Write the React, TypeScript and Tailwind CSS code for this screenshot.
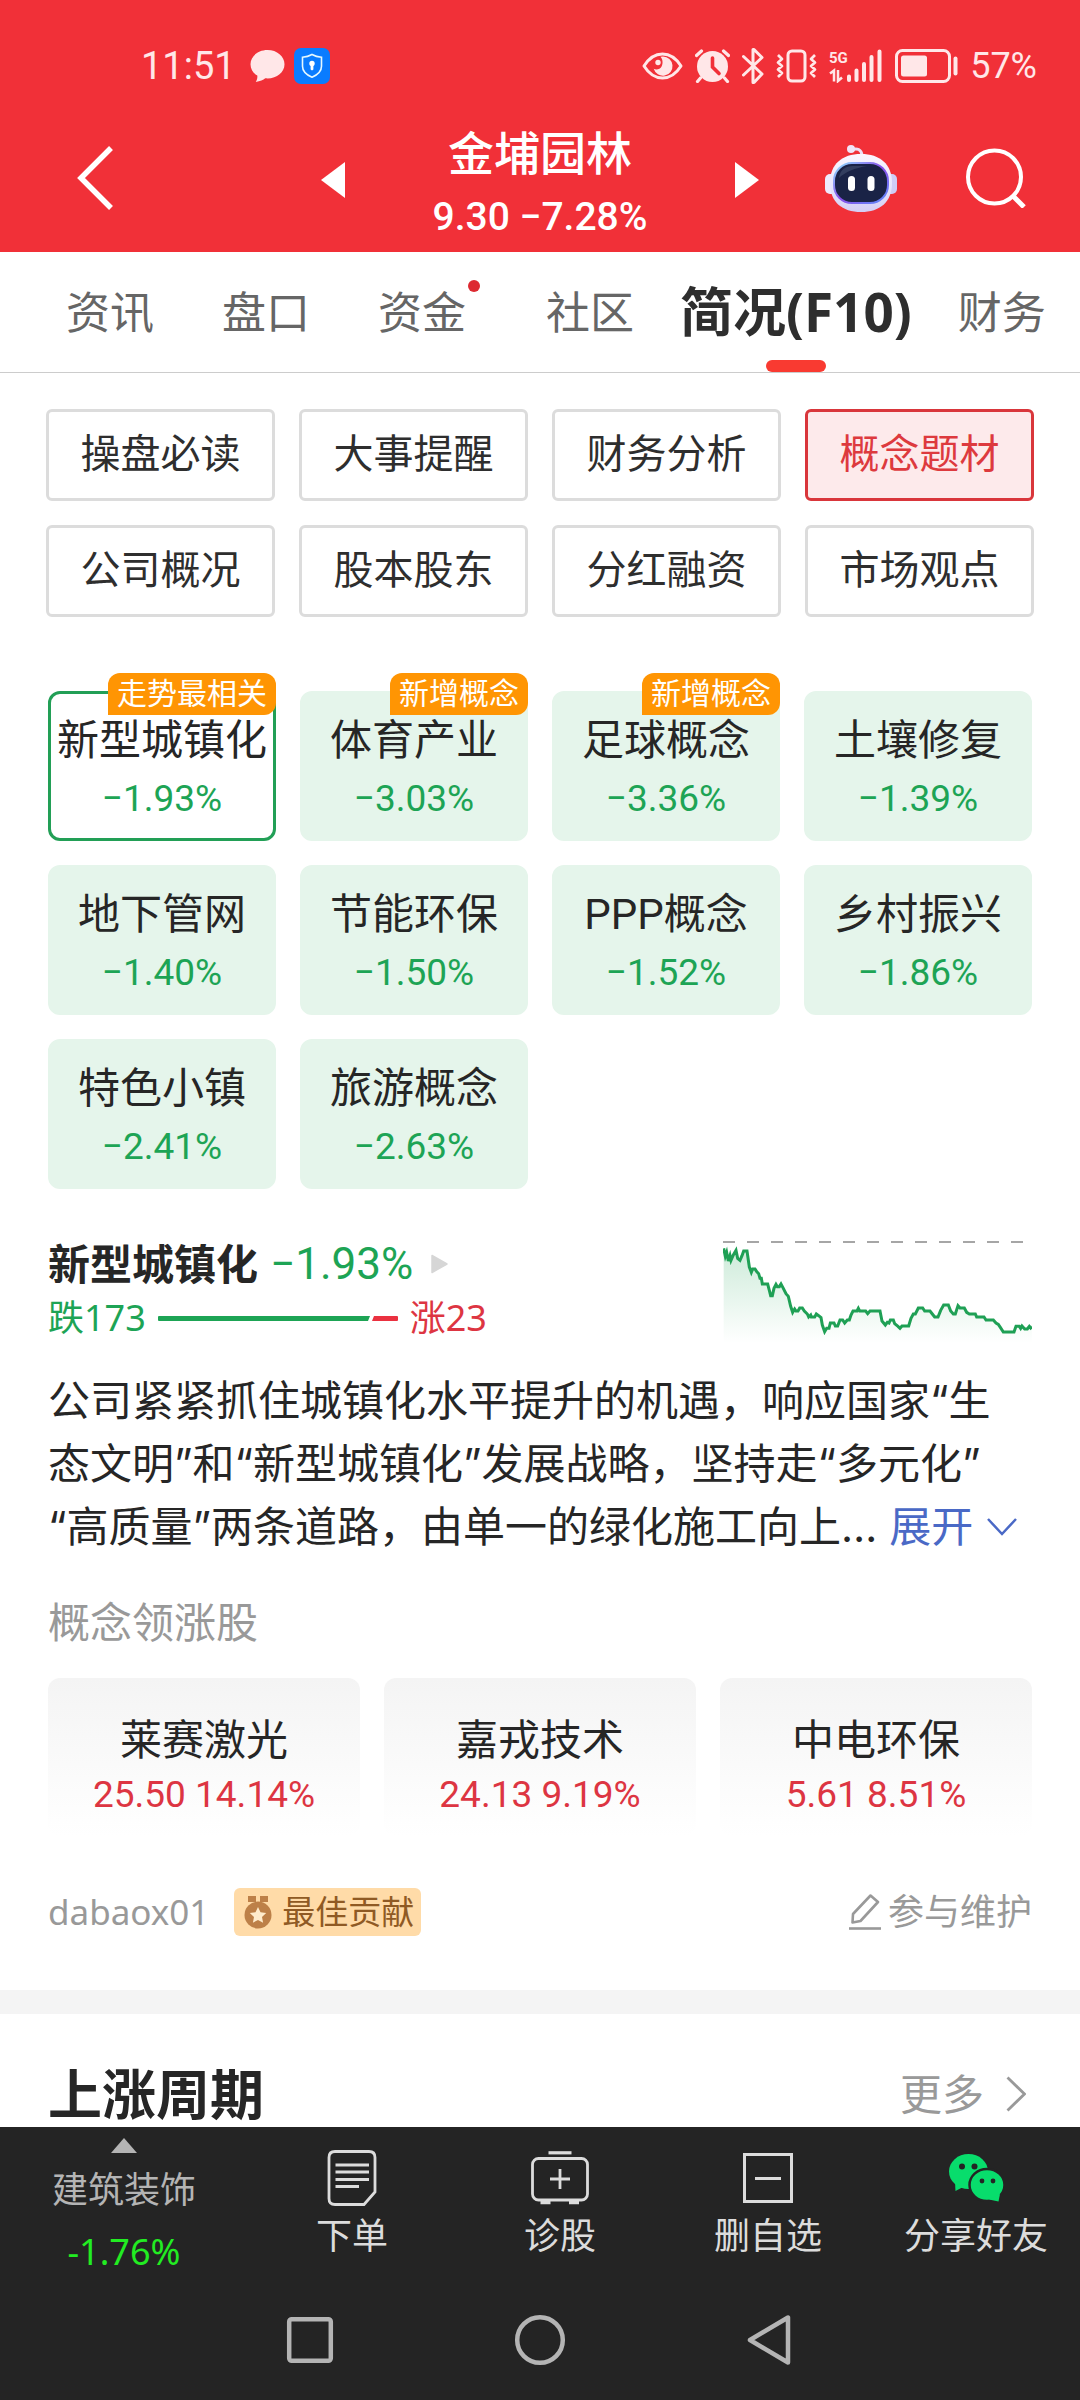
import React from "react";

const cjk = "font-['Noto_Sans','Noto_Sans_CJK_SC',sans-serif]";
const num = "font-['Roboto','Noto_Sans_CJK_SC',sans-serif]";

const sections = ["操盘必读", "大事提醒", "财务分析", "概念题材", "公司概况", "股本股东", "分红融资", "市场观点"];

type Concept = { name: string; change: string; badge?: string; selected?: boolean };

const concepts: Concept[] = [
  { name: "新型城镇化", change: "−1.93%", badge: "走势最相关", selected: true },
  { name: "体育产业", change: "−3.03%", badge: "新增概念" },
  { name: "足球概念", change: "−3.36%", badge: "新增概念" },
  { name: "土壤修复", change: "−1.39%" },
  { name: "地下管网", change: "−1.40%" },
  { name: "节能环保", change: "−1.50%" },
  { name: "PPP概念", change: "−1.52%" },
  { name: "乡村振兴", change: "−1.86%" },
  { name: "特色小镇", change: "−2.41%" },
  { name: "旅游概念", change: "−2.63%" },
];

const leaders = [
  { name: "莱赛激光", quote: "25.50 14.14%" },
  { name: "嘉戎技术", quote: "24.13 9.19%" },
  { name: "中电环保", quote: "5.61 8.51%" },
];

function StatusBar() {
  return (
    <div className="flex h-[130px] items-center justify-between pl-[141px] pr-[43px] pt-[2px] text-[#ffe7e8]">
      <div className="flex items-center">
        <span className={`${num} text-[38px] leading-[44px]`}>11:51</span>
        <svg className="ml-[14px]" width="35" height="34" viewBox="0 0 35 34" fill="currentColor">
          <path d="M17.5 1C8 1 .5 7.3.5 15.2c0 4.8 2.6 8.900 6.800 11.400.3 2.500-.500 4.500-1.500 6.400 4.500-.6 7.400-2.200 9.500-3.700.7.1 1.400.1 2.200.1 9.500 0 17-6.300 17-14.200S27 1 17.500 1Z" />
        </svg>
        <svg className="ml-[9px]" width="36" height="36" viewBox="0 0 36 36">
          <rect width="36" height="36" rx="7" fill="#0a7cff" />
          <path d="M18 6.500c3.200 1.800 6.400 2.500 9.500 2.700v9c0 5-4 8.600-9.500 11-5.500-2.400-9.500-6-9.500-11v-9c3.100-.2 6.300-.9 9.500-2.700Z" fill="none" stroke="#e5f8ff" strokeWidth="1.600" />
          <circle cx="18" cy="15.500" r="2.700" fill="#fff" />
          <path d="M16.600 16h2.800v5.500l-1.400 1-1.400-1Z" fill="#fff" />
        </svg>
      </div>
      <div className="flex items-center gap-3">
        <svg width="41" height="28" viewBox="0 0 41 28">
          <path d="M2 14C7 6 13 2 20.500 2S34 6 39 14c-5 8-11 12-18.500 12S7 22 2 14Z" fill="none" stroke="currentColor" strokeWidth="3" strokeLinejoin="round" />
          <path d="M21 4.500a9.600 9.600 0 1 1-9.300 12.300c2.600 1.600 6.500.5 8-2.500 1.600-3.300.9-7.300-1.200-9.500Z" fill="currentColor" />
          <circle cx="16" cy="10.500" r="2.700" fill="currentColor" />
        </svg>
        <svg width="35" height="34" viewBox="0 0 35 34">
          <circle cx="17.500" cy="17.500" r="15.500" fill="currentColor" />
          <path d="M1.500 6.500 6.500 2M33.500 6.500l-5-4.500M5.500 29 2.500 32.500M29.500 29l3 3.500" stroke="currentColor" strokeWidth="3.200" strokeLinecap="round" />
          <path d="M17.500 9v9l6.500 6.500" fill="none" stroke="#f13038" strokeWidth="3.600" strokeLinecap="round" />
        </svg>
        <svg width="22" height="38" viewBox="0 0 22 38" fill="none" stroke="currentColor" strokeWidth="3" strokeLinecap="round" strokeLinejoin="round">
          <path d="M1.500 9.500 20 27l-8 8.500h-1v-33h1l8 8L1.500 28" />
        </svg>
        <svg width="41" height="34" viewBox="0 0 41 34" fill="none" stroke="currentColor" strokeWidth="3" strokeLinejoin="round">
          <rect x="12" y="2" width="17" height="30" rx="4" />
          <path d="m2 6 4 4-4 3.500 4 3.500-4 3.500 4 3.500-4 4M39 6l-4 4 4 3.500-4 3.500 4 3.500-4 3.500 4 4" strokeWidth="2.700" />
        </svg>
        <svg width="54" height="34" viewBox="0 0 54 34">
          <text x="0" y="14" fill="currentColor" fontFamily="Roboto" fontWeight="700" fontSize="15">5G</text>
          <path d="M1 24.500 5 21.500v11M9 21v11l4-3.500" fill="none" stroke="currentColor" strokeWidth="2.500" />
          <path d="M20 27.500V31M27.500 21.500V31M35 15v16M42.500 8v23M50.500 2.500V31" stroke="currentColor" strokeWidth="4" strokeLinecap="round" />
        </svg>
        <svg width="63" height="34" viewBox="0 0 63 34">
          <rect x="1.500" y="1.500" width="53" height="31" rx="6" fill="none" stroke="currentColor" strokeWidth="3" />
          <rect x="6" y="6.500" width="26" height="21" rx="2.500" fill="currentColor" />
          <path d="M60.500 9.500v15" stroke="currentColor" strokeWidth="4" strokeLinecap="round" />
        </svg>
        <span className={`${num} text-[36px] leading-[44px]`}>57%</span>
      </div>
    </div>
  );
}

function Robot() {
  return (
    <svg width="72" height="68" viewBox="0 0 72 68">
      <defs>
        <linearGradient id="shell" x1="0" y1="0" x2="0" y2="1">
          <stop offset="0" stopColor="#fbf7ff" />
          <stop offset="0.600" stopColor="#e6e4fb" />
          <stop offset="1" stopColor="#d3cdf5" />
        </linearGradient>
        <linearGradient id="rim" x1="0" y1="0" x2="1" y2="1">
          <stop offset="0" stopColor="#8fe3ff" />
          <stop offset="0.500" stopColor="#8a4dea" />
          <stop offset="1" stopColor="#5c8dfa" />
        </linearGradient>
      </defs>
      <path d="M27 5.500c5-1.500 9.500-.5 10 6" fill="none" stroke="#eedff5" strokeWidth="3" />
      <circle cx="26" cy="5" r="4" fill="#f1e4f8" />
      <rect x="0" y="30" width="12" height="20" rx="5" fill="#eeeafd" />
      <rect x="60" y="30" width="12" height="20" rx="5" fill="#cfcdf6" />
      <path d="M36 10c19 0 31 10 31 29S55 68 36 68 5 58 5 39s12-29 31-29Z" fill="url(#shell)" />
      <rect x="9" y="19" width="54" height="40" rx="18" fill="#1a2346" stroke="url(#rim)" strokeWidth="2" />
      <path d="M14 34c1-8 6-12 14-12h14c-12 2-22 6-28 12Z" fill="#44506f" opacity="0.600" />
      <rect x="23" y="32" width="7" height="15" rx="3.500" fill="#fff" />
      <rect x="42.500" y="32" width="7" height="15" rx="3.500" fill="#fff" />
    </svg>
  );
}

function Header() {
  return (
    <header className="bg-[#f13038] text-white">
      <StatusBar />
      <div className="grid grid-cols-[1fr_438px_1fr] items-start pb-[15px]">
        <div className="flex pl-[76px]">
          <button aria-label="返回" className="flex h-24 items-center">
            <svg width="38" height="66" viewBox="0 0 38 66" fill="none" stroke="currentColor" strokeWidth="5.500">
              <path d="M35 3 5 33l30 30" />
            </svg>
          </button>
        </div>
        <div className="flex items-start justify-between">
          <button aria-label="上一只" className="flex h-[100px] items-center">
            <svg width="24" height="36" viewBox="0 0 24 36" fill="currentColor"><path d="M24 0v36L0 18Z" /></svg>
          </button>
          <div className="flex flex-col items-center">
            <h1 className={`${num} text-[46px] font-medium leading-[48px]`}>金埔园林</h1>
            <p className={`${num} mt-[19px] text-[39px] font-medium leading-[40px]`}>9.30 −7.28%</p>
          </div>
          <button aria-label="下一只" className="flex h-[100px] items-center">
            <svg width="24" height="36" viewBox="0 0 24 36" fill="currentColor"><path d="M0 0v36l24-18Z" /></svg>
          </button>
        </div>
        <div className="flex justify-end gap-[69px] pr-[54px]">
          <button aria-label="智能助手" className="flex h-24 items-center"><Robot /></button>
          <button aria-label="搜索" className="flex h-24 items-center">
            <svg width="60" height="60" viewBox="0 0 60 60" fill="none" stroke="currentColor" strokeWidth="4">
              <circle cx="28.500" cy="29" r="26.500" />
              <path d="m47 48 11 11" strokeWidth="5" />
            </svg>
          </button>
        </div>
      </div>
    </header>
  );
}

function Tabs() {
  const tab = "shrink-0 text-[44px] leading-[60px] text-[#666]";
  return (
    <nav className="flex h-[121px] items-center overflow-hidden whitespace-nowrap border-b border-[#ccc] pl-[66px]">
      <button className={`${tab} mr-[68px]`}>资讯</button>
      <button className={`${tab} mr-[68px]`}>盘口</button>
      <button className={`${tab} relative mr-[80px]`}>
        资金
        <span className="absolute -right-[14px] -top-[2px] size-3 rounded-full bg-[#dd2a31]" />
      </button>
      <button className={`${tab} mr-[46px]`}>社区</button>
      <button className="relative mr-[46px] flex h-full shrink-0 items-center text-[53px] font-bold leading-[60px] text-[#2e2e2e]" aria-current="page">
        简况(F10)
        <span className="absolute bottom-0 left-1/2 h-3 w-[60px] -translate-x-1/2 rounded-full bg-[#f93a31]" />
      </button>
      <button className={tab}>财务</button>
    </nav>
  );
}

function SectionGrid() {
  return (
    <div className={`${num} mt-[36px] grid grid-cols-4 gap-6 px-[46px]`}>
      {sections.map((s) => (
        <button
          key={s}
          className={
            s === "概念题材"
              ? "h-[92px] rounded-md border-[3px] border-[#d9363b] bg-[#fdeaeb] text-[40px] leading-[56px] text-[#dd3a3e]"
              : "h-[92px] rounded-md border-[3px] border-[#dcdcdc] text-[40px] leading-[56px] text-[#2e2e2e]"
          }
        >
          {s}
        </button>
      ))}
    </div>
  );
}

function ConceptGrid() {
  return (
    <div className={`${num} mt-[74px] grid grid-cols-4 gap-6`}>
      {concepts.map((c) => (
        <button
          key={c.name}
          className={
            c.selected
              ? "relative flex h-[150px] flex-col items-center justify-center gap-4 whitespace-nowrap rounded-xl border-[3px] border-[#229f56] pt-2"
              : "relative flex h-[150px] flex-col items-center justify-center gap-4 whitespace-nowrap rounded-xl border-[3px] border-[#e5f5eb] bg-[#e5f5eb] pt-2"
          }
        >
          <span className="text-[42px] leading-[42px] text-[#262626]">{c.name}</span>
          <span className="text-[37px] leading-[42px] text-[#1da455]">{c.change}</span>
          {c.badge && (
            <span className="absolute -right-[3px] -top-[21px] rounded-xl rounded-bl-none bg-[#ff9503] px-[9px] text-[30px] leading-[42px] text-white">
              {c.badge}
            </span>
          )}
        </button>
      ))}
    </div>
  );
}

const trend =
  "M71 88 76 112 80 100 85 126 90 110 93 124 100 108 108 94 113 118 120 124 126 110 131 96H141L148 144 154 160 158 150H165L170 158 176 164 180 178H184L187 195H203L208 214 212 230H217L222 208 228 196 232 203 238 203 243 195 250 208 258 224 265 232 272 262 278 280 284 270 288 276H294L299 267H307L313 276 322 285 326 294 332 288 334 294H344L349 285 356 290 363 296 367 318 374 338 380 328H387L391 312H402L406 321H413L420 303H428L434 312 442 303H448L453 288 459 276H471L475 268 479 276H497L503 284 510 276H540L546 306 556 318 562 310 567 312 571 303H580L584 314 594 322 600 328 606 321H626L633 298 640 285H646L655 267H668L674 276H690L697 285 704 294H714L722 274 731 258H745L752 276 760 285H766L774 260 780 267H793L800 280 808 285H826L830 294H852L858 303H880L888 312 895 316 901 325 910 339H942L948 322H958L962 328 966 321 974 330H982L988 322 992 327 996 323";

function ConceptDetail() {
  return (
    <section>
      <div className="mt-[48px] flex items-center justify-between">
        <div>
          <h2 className="flex items-center leading-[54px]">
            <span className="text-[42px] font-bold text-[#262626]">新型城镇化</span>
            <span className={`${num} ml-[12px] text-[44px] text-[#1da455]`}>−1.93%</span>
            <svg className="ml-[17px]" width="18" height="20" viewBox="0 0 18 20"><path d="M2 1.500v17L17 10Z" fill="#d6d6d6" stroke="#d6d6d6" strokeWidth="1.500" strokeLinejoin="round" /></svg>
          </h2>
          <div className="flex items-center text-[36px] leading-[54px]">
            <span className="text-[#1da455]">跌173</span>
            <svg className="mx-[12px]" width="240" height="5" viewBox="0 0 240 5">
              <path d="M1 0H212L210 5H1Q0 5 0 4V1Q0 0 1 0Z" fill="#1da455" />
              <path d="M216 0H239Q240 0 240 1V4Q240 5 239 5H214Z" fill="#ea3140" />
            </svg>
            <span className="text-[#dd3542]">涨23</span>
          </div>
        </div>
        <svg width="309" height="104" viewBox="69 60 927 312" aria-label="走势图">
          <defs>
            <linearGradient id="area" x1="0" y1="0" x2="0" y2="1">
              <stop offset="0" stopColor="#1da455" stopOpacity="0.220" />
              <stop offset="1" stopColor="#1da455" stopOpacity="0" />
            </linearGradient>
          </defs>
          <path d="M69 69H996" stroke="#a6a6a6" strokeWidth="6" strokeDasharray="36 36" />
          <path d={`${trend}V372H71Z`} fill="url(#area)" />
          <path d={trend} fill="none" stroke="#1fa055" strokeWidth="9" />
        </svg>
      </div>
      <p className="mt-[24px] whitespace-nowrap font-['Inter','Noto_Sans_CJK_SC',sans-serif] text-[42px] leading-[63px] text-[#262626]">
        公司紧紧抓住城镇化水平提升的机遇，响应国家“生
        <br />
        态文明”和“新型城镇化”发展战略，坚持走“多元化”
        <br />
        “高质量”两条道路，由单一的绿化施工向上…
        <button className="ml-[12px] inline-flex items-center gap-[14px] align-top leading-[63px] text-[#4a69c6]">
          展开
          <svg width="30" height="18" viewBox="0 0 30 18" fill="none" stroke="currentColor" strokeWidth="2.500"><path d="m1 1 14 15L29 1" /></svg>
        </button>
      </p>
    </section>
  );
}

function Leaders() {
  return (
    <section>
      <h3 className="mt-[34px] text-[42px] leading-[60px] text-[#999]">概念领涨股</h3>
      <div className="mt-[26px] grid grid-cols-3 gap-6">
        {leaders.map((l) => (
          <a key={l.name} href="#" className="flex flex-col items-center rounded-xl bg-linear-to-b from-[#f4f4f4] to-white pb-[14px] pt-8">
            <span className="text-[42px] leading-[58px] text-[#262626]">{l.name}</span>
            <span className={`${num} text-[37px] leading-[54px] text-[#dd3542]`}>{l.quote}</span>
          </a>
        ))}
      </div>
      <div className="mt-[52px] flex items-center justify-between pb-[54px]">
        <div className="flex items-center">
          <span className="text-[35px] leading-[48px] text-[#999]">dabaox01</span>
          <span className="ml-[25px] flex h-12 items-center gap-[10px] rounded-md bg-[#ffdba8] pl-[10px] pr-[7px] text-[33px] leading-[46px] text-[#8f5a24]">
            <svg width="28" height="34" viewBox="0 0 28 34">
              <path d="M4 1h8v6H4ZM16 1h8v6h-8Z" fill="#bd8048" />
              <circle cx="14" cy="20" r="13.500" fill="#bd8048" />
              <path d="m14 12 2.500 5.300 5.700.7-4.200 4 1.100 5.700L14 25l-5.100 2.700 1.100-5.700-4.200-4 5.700-.7Z" fill="#ffeccc" />
            </svg>
            最佳贡献
          </span>
        </div>
        <a href="#" className="flex items-center gap-[6px] text-[36px] leading-[48px] text-[#999]">
          <svg width="34" height="36" viewBox="0 0 34 36" fill="none" stroke="currentColor" strokeWidth="2.600" strokeLinejoin="round">
            <path d="M5 20 22.500 1.500 30 8 12.500 27 4.500 28.500Z" />
            <path d="M1 34.500H33" />
          </svg>
          参与维护
        </a>
      </div>
    </section>
  );
}

function Tool({ label, children }: { label: string; children: React.ReactNode }) {
  return (
    <button className="flex flex-1 flex-col items-center pt-[23px] text-[#dcdcdc]">
      <span className="flex h-14 items-center">{children}</span>
      <span className="mt-[6px] text-[36px] leading-[48px]">{label}</span>
    </button>
  );
}

function Footer() {
  return (
    <footer className="sticky bottom-0 mt-auto bg-[#242424]">
      <div className="flex h-[153px] items-start">
        <button className="flex w-[248px] flex-col items-center pt-[11px] text-[36px] leading-[48px] text-[#b4b4b4]">
          <svg width="26" height="15" viewBox="0 0 26 15" fill="#b4b4b4"><path d="M13 0 26 15H0Z" /></svg>
          <span className="mt-[13px]">建筑装饰</span>
          <span className="mt-[14px] text-[#22ec22]">-1.76%</span>
        </button>
        <Tool label="下单">
          <svg width="50" height="56" viewBox="0 0 50 56" fill="none" stroke="currentColor" strokeWidth="2.800">
            <path d="M8 1.500H42Q48 1.500 48 7.500V42L37 54.500H8Q2 54.500 2 48.500V7.500Q2 1.500 8 1.500Z" />
            <path d="M8.500 15H42M8.500 22H42M8.500 29.500H42M8.500 36.500H32" />
          </svg>
        </Tool>
        <Tool label="诊股">
          <svg width="58" height="54" viewBox="0 0 58 54" fill="none" stroke="currentColor" strokeWidth="2.800">
            <path d="M17.500 1.800H40.500" strokeWidth="3.200" />
            <rect x="1.500" y="7.500" width="55" height="41.500" rx="6" />
            <path d="M29 18V38M19 28H39" />
            <path d="M9.500 51.500H19.500M38 51.500H48" strokeWidth="3.600" />
          </svg>
        </Tool>
        <Tool label="删自选">
          <svg width="50" height="50" viewBox="0 0 50 50" fill="none" stroke="currentColor" strokeWidth="3">
            <rect x="1.500" y="1.500" width="47" height="47" />
            <path d="M12 25.500H38" />
          </svg>
        </Tool>
        <Tool label="分享好友">
          <svg width="55" height="48" viewBox="0 0 55 48">
            <path d="M6 28 6.500 37 16 32Z" fill="#08dd6c" />
            <ellipse cx="19.500" cy="17.500" rx="19.500" ry="17.500" fill="#08dd6c" />
            <ellipse cx="38" cy="31" rx="17.500" ry="16" fill="#08dd6c" stroke="#242424" strokeWidth="2.500" />
            <path d="M51 40 49.500 47.500 40 45.500Z" fill="#08dd6c" />
            <circle cx="13" cy="12.500" r="3" fill="#242424" />
            <circle cx="25.500" cy="12.500" r="3" fill="#242424" />
            <circle cx="33" cy="27" r="2.400" fill="#242424" />
            <circle cx="44" cy="27" r="2.400" fill="#242424" />
          </svg>
        </Tool>
      </div>
      <div className="flex h-[120px] items-center justify-center gap-[180px] text-[#b4b4b4]">
        <button aria-label="最近任务">
          <svg width="48" height="48" viewBox="0 0 48 48" fill="none" stroke="currentColor" strokeWidth="4.500"><rect x="3.200" y="3.200" width="41.600" height="41.600" rx="2.500" /></svg>
        </button>
        <button aria-label="主屏幕">
          <svg width="52" height="52" viewBox="0 0 52 52" fill="none" stroke="currentColor" strokeWidth="4.500"><circle cx="26" cy="26" r="22.800" /></svg>
        </button>
        <button aria-label="返回上级">
          <svg width="48" height="52" viewBox="0 0 48 52" fill="none" stroke="currentColor" strokeWidth="4.500" strokeLinejoin="round"><path d="M4 26 42 3.500V48.500Z" /></svg>
        </button>
      </div>
    </footer>
  );
}

export default function App() {
  return (
    <div className={`${cjk} flex min-h-screen flex-col bg-white`}>
      <Header />
      <Tabs />
      <main>
        <SectionGrid />
        <div className="px-12">
          <ConceptGrid />
          <ConceptDetail />
          <Leaders />
        </div>
        <div className="h-6 bg-[#f4f4f4]" />
        <div className="flex items-center justify-between pl-12 pr-[54px] pt-[47px]">
          <h2 className="text-[54px] font-bold leading-[66px] text-[#262626]">上涨周期</h2>
          <a href="#" className="flex items-center gap-[22px] text-[42px] leading-[60px] text-[#999]">
            更多
            <svg width="20" height="36" viewBox="0 0 20 36" fill="none" stroke="currentColor" strokeWidth="2.800"><path d="m1.500 1.500 17 16.500-17 16.500" /></svg>
          </a>
        </div>
      </main>
      <Footer />
    </div>
  );
}
